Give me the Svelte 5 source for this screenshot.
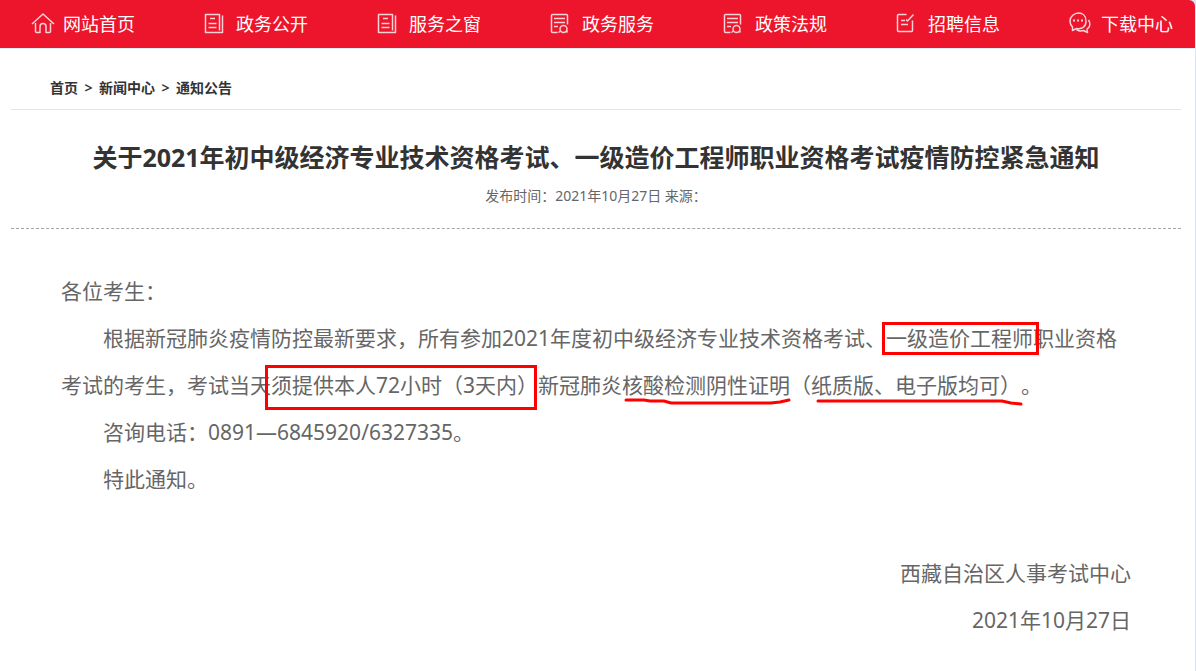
<script>
  const navItems = [
    { label: '网站首页', icon: 'home' },
    { label: '政务公开', icon: 'news' },
    { label: '服务之窗', icon: 'news' },
    { label: '政务服务', icon: 'form' },
    { label: '政策法规', icon: 'form' },
    { label: '招聘信息', icon: 'edit' },
    { label: '下载中心', icon: 'chat' },
  ];

  const crumbs = ['首页', '新闻中心', '通知公告'];
</script>

<div class="page">
  <nav class="nav">
    {#each navItems as item}
      <a href="#top" class="nav-item">
        <svg class="nav-icon" viewBox="0 0 24 24" aria-hidden="true">
          {#if item.icon === 'home'}
            <path d="M1 12 12 2 23 12M4.500 11v8.500a1 1 0 0 0 1 1h3.500v-6a3 3 0 0 1 6 0v6h3.500a1 1 0 0 0 1-1V11" />
          {:else if item.icon === 'news'}
            <path d="M15.500 18.500V2.500h-14v18h17V3.500" />
            <path d="M6 6.500h5M4.500 11.500h8M4.500 15.500h8" />
          {:else if item.icon === 'form'}
            <path d="M7.500 20.500H2.500a1 1 0 0 1-1-1v-16a1 1 0 0 1 1-1h14a1 1 0 0 1 1 1V12.500M4 6.500h11M4 10.500h11M4 14.500h4" />
            <circle cx="13.500" cy="17" r="3.500" />
            <path d="m10.500 19-2 1.500M16.500 19l1 1.500" />
          {:else if item.icon === 'edit'}
            <path d="M10.500 2.500h-8a1 1 0 0 0-1 1v15a1 1 0 0 0 1 1h13a1 1 0 0 0 1-1V8.500M5 8.500h4M5 12.500h7M10 7.500l1.500 1.500 6-6.500" />
          {:else}
            <path d="M3.500 15v3.500l4-2c6 1 9.500-2 9.500-7.500S13.500 1 9.500 1 1 4.500 1 9c0 2.500 1 4.500 2.500 6z" />
            <path d="M19.500 8c2.500 3.500 1.500 7-1.500 9l.5 3.500-4-2c-2.500.8-5 .3-7-1" />
            <path class="dots" d="M4 8.500h2M8 8.500h2M12 8.500h2" />
          {/if}
        </svg>
        <span>{item.label}</span>
      </a>
    {/each}
  </nav>

  <main class="content">
    <div class="crumbs">
      {#each crumbs as crumb, i}
        {#if i > 0}<span class="sep">&gt;</span>{/if}
        <a href="#top">{crumb}</a>
      {/each}
    </div>

    <header class="heading">
      <h1>关于2021年初中级经济专业技术资格考试、一级造价工程师职业资格考试疫情防控紧急通知</h1>
      <p>发布时间：2021年10月27日 来源：</p>
    </header>

    <article class="article">
      <p>各位考生：</p>
      <p class="indent">根据新冠肺炎疫情防控最新要求，所有参加2021年度初中级经济专业技术资格考试、<span class="mark box">一级造价工程师</span>职业资格考试的考生，考试当天<span class="mark box tall">须提供本人72小时（3天内）</span>新冠肺炎<span class="mark">核酸检测阴性证明<svg class="stroke" viewBox="0 0 168 8" preserveAspectRatio="none" aria-hidden="true"><path d="M4 2h18l6 1h14l7 2h100l9-1 9-2" /></svg></span>（<span class="mark">纸质版、电子版均可）<svg class="stroke" viewBox="0 0 210 8" preserveAspectRatio="none" aria-hidden="true"><path d="M7 3h184l9 2 10 1" /></svg></span>。</p>
      <p class="indent">咨询电话：0891—6845920/6327335。</p>
      <p class="indent">特此通知。</p>
      <div class="signature">
        <p>西藏自治区人事考试中心</p>
        <p>2021年10月27日</p>
      </div>
    </article>
  </main>
</div>

<style>
  :global(body) { background: #dce6f0; }
  .page {
    min-height: 100vh;
    margin-right: 1px;
    background: #fff;
    border-top-right-radius: 6px;
    overflow: hidden;
    color: #333;
    font-family: "Noto Sans", "Noto Sans CJK SC", sans-serif;
    text-spacing-trim: space-all;
  }
  p, h1 { margin: 0; }
  a { color: inherit; text-decoration: none; }

  .nav {
    display: flex; align-items: center; justify-content: space-between;
    height: 48px; padding: 0 22px 0 31px;
    background: #ec152b;
    border-bottom: 1px solid #e4ecf5;
    color: #fff;
  }
  .nav-item {
    display: flex; align-items: center; gap: 8px;
    font-size: 18px; line-height: 24px; white-space: nowrap;
  }
  .nav-icon {
    width: 24px; height: 24px; overflow: visible;
    fill: none; stroke: #fbd3d7; stroke-width: 1.5;
    stroke-linejoin: round;
  }
  .dots { stroke-width: 2; }

  .content { padding: 0 14px 0 11px; }
  .crumbs {
    display: flex; align-items: center; gap: 6px;
    padding: 27px 39px 9px;
    border-bottom: 1px solid #e4e4e4;
    font-size: 14px; font-weight: 600; line-height: 24px;
  }
  .sep { min-width: 9px; text-align: center; }

  .heading {
    padding: 27px 0 20px;
    border-bottom: 1px dashed #a6a6a6;
    text-align: center;
  }
  .heading h1 { font-size: 25px; font-weight: 700; line-height: 40px; }
  .heading p { padding-top: 7px; color: #666; font-size: 14px; line-height: 24px; }

  .article {
    padding: 39px 50px 28px;
    color: #666; font-size: 21px; line-height: 47px;
  }
  .indent { text-indent: 2em; }
  .signature { padding-top: 47px; text-align: right; }

  /* red highlights laid over the text */
  .mark { position: relative; text-indent: 0; }
  .box::after {
    content: ""; position: absolute; inset: -2px -6px -3px -4px;
    border: 3px solid #f00;
  }
  .tall::after { inset: -6px 1px -11px -6px; }
  .stroke {
    position: absolute; left: 0; bottom: -7px;
    width: 100%; height: 8px; overflow: visible;
    fill: none; stroke: #f00; stroke-width: 3; stroke-linecap: round;
  }
</style>
